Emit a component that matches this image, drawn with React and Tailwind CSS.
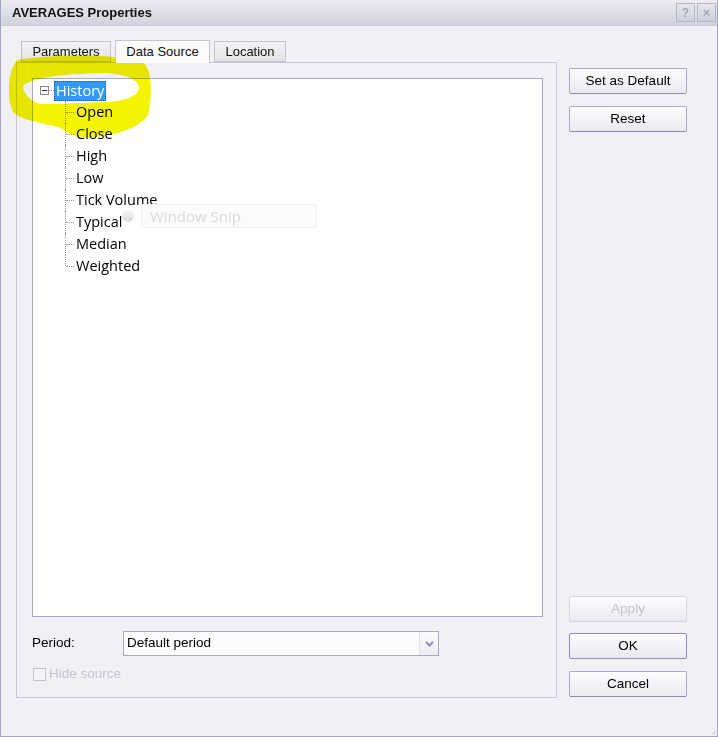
import React from "react";

const ui = { fontFamily: '"Liberation Sans", Arial, sans-serif' };
const treeFont = { fontFamily: '"Open Sans", "Noto Sans", sans-serif' };

const fields = ["Open", "Close", "High", "Low", "Tick Volume", "Typical", "Median", "Weighted"];

function DialogButton({ children, disabled, focused }) {
  return (
    <button
      disabled={disabled}
      className={
        "block h-[26px] w-[118px] rounded-[2px] border bg-gradient-to-b from-[#fdfdfe] to-[#e9e9f0] text-[13.5px] " +
        (focused
          ? "border-[#8a8ad0] text-black"
          : disabled
          ? "border-[#d4d4e0] text-[#c4c4cc]"
          : "border-[#a9a9c0] border-b-[#8c8ca6] text-black")
      }
      style={ui}
    >
      {children}
    </button>
  );
}

function Tab({ label, active, width }) {
  return (
    <div
      className={
        "flex items-center justify-center border border-[#c4c4cc] text-[13px] text-[#111] " +
        width +
        (active
          ? " h-[23px] -mb-px border-b-0 bg-[#fbfbfc] z-10"
          : " h-[21px] bg-gradient-to-b from-[#f4f4f6] to-[#e3e3e6]")
      }
      style={ui}
    >
      {label}
    </div>
  );
}

function FieldRow({ label, last }) {
  return (
    <div className="flex h-[22px] items-center">
      <div className="relative ml-[32px] h-full w-[10px]">
        <span
          className={
            "absolute left-0 top-0 border-l border-dotted border-[#999] " + (last ? "h-[11px]" : "h-full")
          }
        />
        <span className="absolute left-[1px] top-[11px] w-[8px] border-t border-dotted border-[#999]" />
      </div>
      <span className="ml-px text-[14.5px] text-black" style={treeFont}>
        {label}
      </span>
    </div>
  );
}

export default function App() {
  return (
    <div className="relative h-[737px] w-[718px] overflow-hidden border-x border-b border-[#a4a4c0] bg-[#f0f0f6]">
      {/* title bar */}
      <div className="flex h-[26px] items-center justify-between border-b border-[#c8c8d8] bg-gradient-to-b from-[#ececf2] to-[#d2d2de] pl-[11px] pr-[1px]">
        <span className="text-[13px] font-bold text-[#111]" style={ui}>
          AVERAGES Properties
        </span>
        <div className="flex gap-[2px]">
          <div className="flex h-[19px] w-[19px] items-center justify-center border border-[#b4b4c8] bg-gradient-to-b from-[#e6e6ee] to-[#d0d0dc] text-[12px] font-bold text-[#a4a4b8]" style={ui}>
            ?
          </div>
          <div className="flex h-[19px] w-[19px] items-center justify-center border border-[#b4b4c8] bg-gradient-to-b from-[#e6e6ee] to-[#d0d0dc] text-[13px] font-bold text-[#a4a4b8]" style={ui}>
            ×
          </div>
        </div>
      </div>

      <div className="flex gap-[12px] pl-[15px] pt-[14px]">
        {/* tabs + page */}
        <div className="flex w-[541px] flex-col">
          <div className="flex items-end gap-[4px] pl-[5px]">
            <Tab label="Parameters" width="w-[90px]" />
            <Tab label="Data Source" width="w-[95px]" active />
            <Tab label="Location" width="w-[72px]" />
          </div>
          <div className="flex h-[636px] flex-col border border-[#c9c9d3] px-[15px] pt-[15px]">
            <div className="relative h-[539px] w-[511px] border border-[#a9a9c3] bg-white pt-px">
              {/* root node */}
              <div className="flex h-[21px] items-center pl-[7px]">
                <div className="flex h-[9px] w-[9px] items-center justify-center border border-[#8a8a8a] bg-white">
                  <span className="h-px w-[5px] bg-[#222]" />
                </div>
                <span className="w-[5px] border-t border-dotted border-[#999]" />
                <span className="flex h-[20px] items-center border border-dotted border-[#1d5fb0] bg-[#3399ff] px-[1px] text-[14.5px] text-white" style={treeFont}>
                  History
                </span>
              </div>
              {fields.map((f, i) => (
                <FieldRow key={f} label={f} last={i === fields.length - 1} />
              ))}

              {/* faded snipping-tool ghost */}
              <div className="absolute left-[89px] top-[125px] flex items-center gap-[7px]">
                <span className="h-[12px] w-[12px] rounded-full bg-gradient-to-b from-[#f4f4f4] to-[#dcdcdc]" />
                <span className="flex h-[24px] w-[176px] items-center rounded-[2px] border border-[#eef0f6] bg-[#fafbfd] pl-[8px] text-[15px] text-[#dadada]" style={treeFont}>
                  Window Snip
                </span>
              </div>
            </div>

            <div className="mt-[14px] flex items-center">
              <span className="w-[91px] text-[13.5px] text-black" style={ui}>
                Period:
              </span>
              <div className="flex h-[25px] w-[316px] border border-[#a9a9c3] bg-[#fcfcfc]">
                <span className="flex flex-1 items-center pl-[3px] text-[13.5px] text-black" style={ui}>
                  Default period
                </span>
                <span className="flex w-[19px] items-center justify-center border-l border-[#e2e2ea] bg-gradient-to-b from-[#fafafc] to-[#ececf2]">
                  <svg width="9" height="6" viewBox="0 0 9 6">
                    <path d="M1 1 L4.5 4.5 L8 1" fill="none" stroke="#8e8eb0" strokeWidth="2" />
                  </svg>
                </span>
              </div>
            </div>

            <div className="mt-[8px] flex items-center gap-[3px] pl-[1px]">
              <span className="h-[13px] w-[13px] border border-[#c4c4cc] bg-[#f4f4f8]" />
              <span className="text-[13.5px] text-[#c4c4cc]" style={ui}>
                Hide source
              </span>
            </div>
          </div>
        </div>

        {/* command buttons */}
        <div className="flex h-[657px] flex-col pt-[28px]">
          <div className="flex flex-col gap-[12px]">
            <DialogButton>Set as Default</DialogButton>
            <DialogButton>Reset</DialogButton>
          </div>
          <div className="mt-auto flex flex-col">
            <DialogButton disabled>Apply</DialogButton>
            <div className="mt-[11px]">
              <DialogButton focused>OK</DialogButton>
            </div>
            <div className="mt-[12px]">
              <DialogButton>Cancel</DialogButton>
            </div>
          </div>
        </div>
      </div>

      {/* resize grip */}
      <div className="absolute bottom-[2px] right-[2px] grid grid-cols-3 gap-[1px]">
        <span />
        <span />
        <span className="h-px w-px bg-[#b0b0c0]" />
        <span />
        <span className="h-px w-px bg-[#b0b0c0]" />
        <span className="h-px w-px bg-[#b0b0c0]" />
      </div>

      {/* yellow marker circle */}
      <svg className="pointer-events-none absolute left-0 top-0 mix-blend-multiply" width="160" height="145" viewBox="0 0 160 145">
        <path
          fillRule="evenodd"
          fill="#f4f400"
          d="M16 60 C50 54 120 54 142 62 C152 70 151 100 147 115 C140 126 122 133 102 136 C82 139 68 136 60 128 C45 123 20 121 12 112 C6 100 6 72 16 60 Z
             M22 86 C30 78 60 74 100 73 C125 73 138 80 138 88 C137 96 125 101 105 102 C80 103 55 104 38 104 C28 100 22 92 22 86 Z"
        />
      </svg>
    </div>
  );
}
